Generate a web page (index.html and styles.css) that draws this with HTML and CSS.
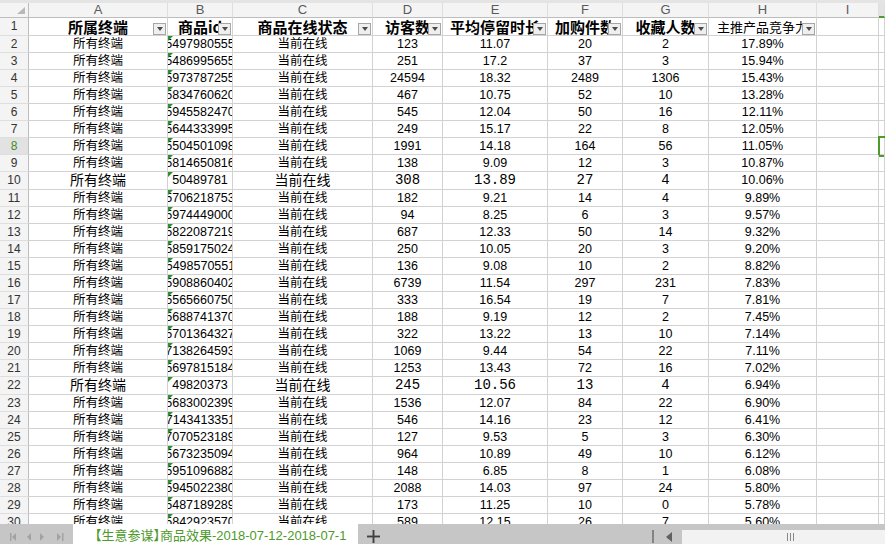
FILE: index.html
```html
<!DOCTYPE html>
<html lang="zh-CN">
<head>
    <meta charset="UTF-8">
    <title>商品效果</title>
    <link rel="stylesheet" href="styles.css">
</head>
<body>
    <div class="sheet">
        <!-- column letters -->
        <div class="row cols"><div class="corner"></div><div>A</div><div>B</div><div>C</div><div>D</div><div>E</div><div>F</div><div>G</div><div>H</div><div>I</div><div class="jh"></div></div>

        <!-- header row with filter buttons -->
        <div class="row head">
            <div class="rh">1</div>
            <div>所属终端<span class="fb"></span></div>
            <div>商品id<span class="fb"></span></div>
            <div>商品在线状态<span class="fb"></span></div>
            <div>访客数<span class="fb"></span></div>
            <div>平均停留时长<span class="fb"></span></div>
            <div>加购件数<span class="fb"></span></div>
            <div>收藏人数<span class="fb"></span></div>
            <div class="thin">主推产品竞争力<span class="fb"></span></div>
            <div></div><div></div>
        </div>

        <div class="row"><div class="rh">2</div><div>所有终端</div><div class="id"><span>554979805555</span></div><div>当前在线</div><div>123</div><div>11.07</div><div>20</div><div>2</div><div>17.89%</div><div></div><div></div></div>
        <div class="row"><div class="rh">3</div><div>所有终端</div><div class="id"><span>554869956551</span></div><div>当前在线</div><div>251</div><div>17.2</div><div>37</div><div>3</div><div>15.94%</div><div></div><div></div></div>
        <div class="row"><div class="rh">4</div><div>所有终端</div><div class="id"><span>559737872551</span></div><div>当前在线</div><div>24594</div><div>18.32</div><div>2489</div><div>1306</div><div>15.43%</div><div></div><div></div></div>
        <div class="row"><div class="rh">5</div><div>所有终端</div><div class="id"><span>558347606201</span></div><div>当前在线</div><div>467</div><div>10.75</div><div>52</div><div>10</div><div>13.28%</div><div></div><div></div></div>
        <div class="row"><div class="rh">6</div><div>所有终端</div><div class="id"><span>559455824701</span></div><div>当前在线</div><div>545</div><div>12.04</div><div>50</div><div>16</div><div>12.11%</div><div></div><div></div></div>
        <div class="row"><div class="rh">7</div><div>所有终端</div><div class="id"><span>556443339951</span></div><div>当前在线</div><div>249</div><div>15.17</div><div>22</div><div>8</div><div>12.05%</div><div></div><div></div></div>
        <div class="row"><div class="rh on">8</div><div>所有终端</div><div class="id"><span>555045010981</span></div><div>当前在线</div><div>1991</div><div>14.18</div><div>164</div><div>56</div><div>11.05%</div><div></div><div class="sel"></div></div>
        <div class="row"><div class="rh">9</div><div>所有终端</div><div class="id"><span>558146508161</span></div><div>当前在线</div><div>138</div><div>9.09</div><div>12</div><div>3</div><div>10.87%</div><div></div><div></div></div>
        <div class="row alt"><div class="rh">10</div><div>所有终端</div><div class="id"><span>50489781</span></div><div>当前在线</div><div>308</div><div>13.89</div><div>27</div><div>4</div><div>10.06%</div><div></div><div></div></div>
        <div class="row"><div class="rh">11</div><div>所有终端</div><div class="id"><span>557062187531</span></div><div>当前在线</div><div>182</div><div>9.21</div><div>14</div><div>4</div><div>9.89%</div><div></div><div></div></div>
        <div class="row"><div class="rh">12</div><div>所有终端</div><div class="id"><span>559744490001</span></div><div>当前在线</div><div>94</div><div>8.25</div><div>6</div><div>3</div><div>9.57%</div><div></div><div></div></div>
        <div class="row"><div class="rh">13</div><div>所有终端</div><div class="id"><span>558220872191</span></div><div>当前在线</div><div>687</div><div>12.33</div><div>50</div><div>14</div><div>9.32%</div><div></div><div></div></div>
        <div class="row"><div class="rh">14</div><div>所有终端</div><div class="id"><span>558591750241</span></div><div>当前在线</div><div>250</div><div>10.05</div><div>20</div><div>3</div><div>9.20%</div><div></div><div></div></div>
        <div class="row"><div class="rh">15</div><div>所有终端</div><div class="id"><span>554985705511</span></div><div>当前在线</div><div>136</div><div>9.08</div><div>10</div><div>2</div><div>8.82%</div><div></div><div></div></div>
        <div class="row"><div class="rh">16</div><div>所有终端</div><div class="id"><span>559088604021</span></div><div>当前在线</div><div>6739</div><div>11.54</div><div>297</div><div>231</div><div>7.83%</div><div></div><div></div></div>
        <div class="row"><div class="rh">17</div><div>所有终端</div><div class="id"><span>555656607501</span></div><div>当前在线</div><div>333</div><div>16.54</div><div>19</div><div>7</div><div>7.81%</div><div></div><div></div></div>
        <div class="row"><div class="rh">18</div><div>所有终端</div><div class="id"><span>556887413701</span></div><div>当前在线</div><div>188</div><div>9.19</div><div>12</div><div>2</div><div>7.45%</div><div></div><div></div></div>
        <div class="row"><div class="rh">19</div><div>所有终端</div><div class="id"><span>557013643271</span></div><div>当前在线</div><div>322</div><div>13.22</div><div>13</div><div>10</div><div>7.14%</div><div></div><div></div></div>
        <div class="row"><div class="rh">20</div><div>所有终端</div><div class="id"><span>571382645931</span></div><div>当前在线</div><div>1069</div><div>9.44</div><div>54</div><div>22</div><div>7.11%</div><div></div><div></div></div>
        <div class="row"><div class="rh">21</div><div>所有终端</div><div class="id"><span>556978151841</span></div><div>当前在线</div><div>1253</div><div>13.43</div><div>72</div><div>16</div><div>7.02%</div><div></div><div></div></div>
        <div class="row alt"><div class="rh">22</div><div>所有终端</div><div class="id"><span>49820373</span></div><div>当前在线</div><div>245</div><div>10.56</div><div>13</div><div>4</div><div>6.94%</div><div></div><div></div></div>
        <div class="row"><div class="rh">23</div><div>所有终端</div><div class="id"><span>556830023991</span></div><div>当前在线</div><div>1536</div><div>12.07</div><div>84</div><div>22</div><div>6.90%</div><div></div><div></div></div>
        <div class="row"><div class="rh">24</div><div>所有终端</div><div class="id"><span>571434133511</span></div><div>当前在线</div><div>546</div><div>14.16</div><div>23</div><div>12</div><div>6.41%</div><div></div><div></div></div>
        <div class="row"><div class="rh">25</div><div>所有终端</div><div class="id"><span>570705231891</span></div><div>当前在线</div><div>127</div><div>9.53</div><div>5</div><div>3</div><div>6.30%</div><div></div><div></div></div>
        <div class="row"><div class="rh">26</div><div>所有终端</div><div class="id"><span>556732350941</span></div><div>当前在线</div><div>964</div><div>10.89</div><div>49</div><div>10</div><div>6.12%</div><div></div><div></div></div>
        <div class="row"><div class="rh">27</div><div>所有终端</div><div class="id"><span>559510968821</span></div><div>当前在线</div><div>148</div><div>6.85</div><div>8</div><div>1</div><div>6.08%</div><div></div><div></div></div>
        <div class="row"><div class="rh">28</div><div>所有终端</div><div class="id"><span>559450223801</span></div><div>当前在线</div><div>2088</div><div>14.03</div><div>97</div><div>24</div><div>5.80%</div><div></div><div></div></div>
        <div class="row"><div class="rh">29</div><div>所有终端</div><div class="id"><span>554871892891</span></div><div>当前在线</div><div>173</div><div>11.25</div><div>10</div><div>0</div><div>5.78%</div><div></div><div></div></div>
        <div class="row"><div class="rh">30</div><div>所有终端</div><div class="id"><span>558429235701</span></div><div>当前在线</div><div>589</div><div>12.15</div><div>26</div><div>7</div><div>5.60%</div><div></div><div></div></div>
    </div>

    <!-- sheet tabs + horizontal scroll -->
    <div class="tabbar">
        <div class="nav">
            <svg width="73" height="20" viewBox="0 0 73 20">
                <rect x="10" y="9" width="1.5" height="8" fill="#a2a2a2"/>
                <polygon points="16,9 12,13 16,17" fill="#a2a2a2"/>
                <polygon points="31,9 27,13 31,17" fill="#a2a2a2"/>
                <polygon points="40,9 44,13 40,17" fill="#a2a2a2"/>
                <polygon points="57,9 61,13 57,17" fill="#a2a2a2"/>
                <rect x="62" y="9" width="1.5" height="8" fill="#a2a2a2"/>
            </svg>
        </div>
        <div class="tab">【生意参谋】商品效果-2018-07-12-2018-07-1</div>
        <div class="add">
            <svg width="14" height="14" viewBox="0 0 14 14">
                <rect x="0" y="6" width="14" height="2" fill="#3f3f3f"/>
                <rect x="6" y="0" width="2" height="14" fill="#3f3f3f"/>
            </svg>
        </div>
        <div class="gap"></div>
        <div class="split"></div>
        <div class="hleft">
            <svg width="6" height="10" viewBox="0 0 6 10"><polygon points="6,0 0,5 6,10" fill="#606060"/></svg>
        </div>
        <div class="hscroll"><span class="grip"></span></div>
    </div>
</body>
</html>
```

FILE: styles.css
```css
* {
    box-sizing: border-box;
}
body {
    margin: 0;
    width: 885px;
    height: 544px;
    overflow: hidden;
    display: flex;
    flex-direction: column;
    background: #fff;
    font-family: "Liberation Sans", "Noto Sans CJK SC", sans-serif;
}
.sheet {
    flex: 1;
    overflow: hidden;
}
.row {
    display: grid;
    grid-template-columns: 29px 139px 65px 140px 70px 105px 75px 86px 108px 62px 1fr;
    height: 17px;
}
.row > div {
    position: relative;
    display: flex;
    align-items: center;
    justify-content: center;
    white-space: nowrap;
    border-right: 1px solid #d2d2d2;
    border-bottom: 1px solid #d2d2d2;
    font-size: 12.5px;
    line-height: 16px;
    color: #000;
}

/* column letters */
.cols {
    height: 18px;
    border-top: 3px solid #e4e4e4;
}
.cols > div {
    background: #f4f4f4;
    color: #5a5a5a;
    font-size: 13px;
    line-height: 14px;
    border-right-color: #dedede;
    border-bottom-color: #bdbdbd;
}
.cols .corner {
    justify-content: flex-end;
    align-items: flex-end;
    padding: 0 3px 3px 0;
    border-right-color: #bdbdbd;
}
.corner::after {
    content: "";
    width: 8px;
    height: 7px;
    background: #b9b9b9;
    clip-path: polygon(100% 0, 100% 100%, 0 100%);
}
.cols .jh {
    background: #e3e3e3;
    border-bottom: 2px solid #4e9a2a;
}

/* row numbers */
.row > .rh {
    background: #f4f4f4;
    color: #333;
    font-size: 12px;
    border-right-color: #bdbdbd;
    border-bottom-color: #dedede;
}
.row > .rh.on {
    background: #e2e2e2;
    color: #3f8f2a;
}

/* header row */
.head {
    height: 18px;
}
.head > div {
    font-family: "Noto Sans CJK SC", sans-serif;
    font-size: 15px;
    line-height: 17px;
    font-weight: bold;
}
.head > div.rh {
    font-family: "Liberation Sans", sans-serif;
    font-size: 12px;
    font-weight: normal;
}
.head > div.thin {
    font-size: 13px;
    font-weight: normal;
}
.fb {
    position: absolute;
    right: 1px;
    bottom: 0;
    width: 13px;
    height: 12px;
    border: 1px solid #a6a6a6;
    background: #efefef;
    display: flex;
    align-items: center;
    justify-content: center;
}
.fb::after {
    content: "";
    border-left: 3.5px solid transparent;
    border-right: 3.5px solid transparent;
    border-top: 4px solid #4a4a4a;
}

/* id column, numbers stored as text, clipped on both sides */
.row > .id {
    overflow: hidden;
}
.row > .id::before {
    content: "";
    position: absolute;
    left: 0;
    top: 0;
    border-top: 5px solid #2f8f2f;
    border-right: 5px solid transparent;
}

/* rows pasted with another font */
.alt {
    height: 18px;
}
.alt > div {
    font-size: 14px;
    line-height: 17px;
}
.alt > div:nth-child(3),
.alt > div:nth-child(9) {
    font-size: 12.5px;
}
.alt > div:nth-child(5),
.alt > div:nth-child(6),
.alt > div:nth-child(7),
.alt > div:nth-child(8) {
    font-family: "Liberation Mono", monospace;
    font-size: 14px;
}

/* selected cell at the right edge */
.sel::after {
    content: "";
    position: absolute;
    left: -1px;
    top: -2px;
    right: -3px;
    bottom: -3px;
    border: 2px solid #4e9a2a;
}

/* bottom bar */
.tabbar {
    height: 20px;
    display: flex;
    background: #c6c6c6;
    position: relative;
}
.nav {
    width: 73px;
}
.nav svg {
    display: block;
}
.tab {
    width: 285px;
    background: #fff;
    color: #4e9a2a;
    font-family: "Liberation Sans", "Noto Sans CJK SC", sans-serif;
    font-size: 13px;
    line-height: 16px;
    padding: 4px 0 0 22px;
    white-space: nowrap;
    overflow: hidden;
    font-feature-settings: "halt";
}
.add {
    width: 30px;
    display: flex;
    align-items: center;
    justify-content: center;
    padding-top: 4px;
}
.add svg {
    width: 13px;
    height: 13px;
}
.gap {
    flex: 1;
}
.split {
    width: 2px;
    height: 13px;
    margin-top: 6px;
    background: #848484;
}
.hleft {
    width: 28px;
    display: flex;
    align-items: center;
    padding: 6px 0 0 12px;
}
.hscroll {
    width: 203px;
    margin-top: 6px;
    background: #f2f2f2;
    position: relative;
}
.grip {
    position: absolute;
    left: 105px;
    top: 3px;
    width: 7px;
    height: 8px;
    border-left: 1px solid #8a8a8a;
    border-right: 1px solid #8a8a8a;
}
.grip::after {
    content: "";
    position: absolute;
    left: 2px;
    top: 0;
    width: 1px;
    height: 8px;
    background: #8a8a8a;
}
```
